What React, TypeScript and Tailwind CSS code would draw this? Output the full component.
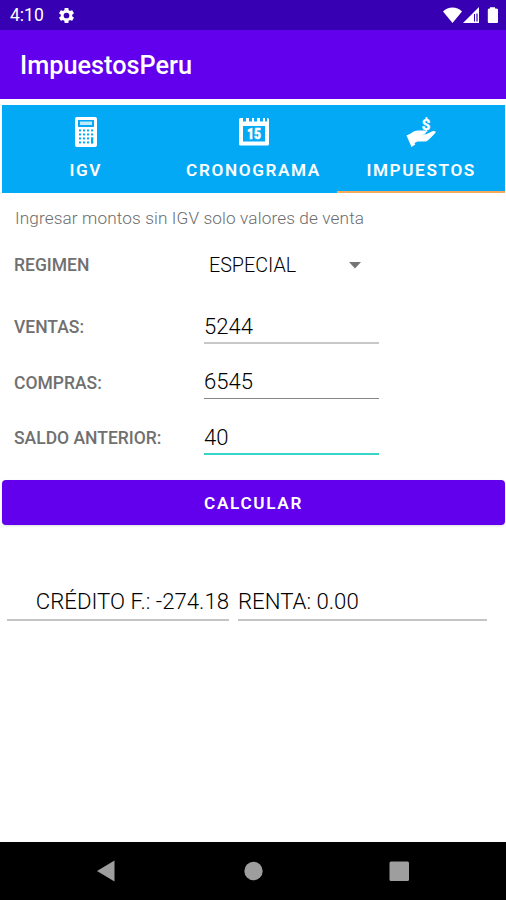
import { useState } from "react";
import clsx from "clsx";

function CalculatorIcon() {
  return (
    <svg className="h-[30px] w-[22px]" viewBox="0 0 22 30">
      <rect x="0" y="0" width="22" height="30" rx="2" fill="#fff" />
      <rect x="3" y="3" width="16" height="7" fill="#03a9f4" />
      <rect x="5" y="4.5" width="12" height="3.5" fill="#fff" fillOpacity="0.75" />
      {[12.5, 16.5, 20.5, 24.5].map((y) =>
        [4, 8, 12, 16].map((x) => (
          <rect key={`${x}-${y}`} x={x} y={y} width="2.2" height="1.9" fill="#03a9f4" />
        ))
      )}
      <rect x="16" y="20.5" width="2.2" height="5.9" fill="#03a9f4" />
    </svg>
  );
}

function CalendarIcon() {
  return (
    <svg className="h-[30px] w-[30px]" viewBox="0 0 30 30">
      <path fill="#fff" fillRule="evenodd" d="M1.5 1H4v3.500h3V1h3v3.500h3V1h2v3.500h3V1h3v3.500h3V1h2v3.500h2V1h.5Q30 1 30 2.500v24.500q0 1.500-1.500 1.500H1.500Q0 28.500 0 27V2.500Q0 1 1.500 1zM4 9v15.500h22V9z" />
      <text x="15" y="22" textAnchor="middle" textLength="14" lengthAdjust="spacingAndGlyphs" fill="#fff" stroke="#fff" strokeWidth="0.500" fontSize="15" fontWeight="900" fontFamily="Roboto, sans-serif">15</text>
    </svg>
  );
}

function HandIcon() {
  return (
    <svg className="h-[30px] w-[30px] overflow-visible" viewBox="0 0 30 30">
      <path fill="#fff" d="M.5 18.600 5.200 16.300C7 14.400 9.500 13.500 12.200 13.500h6.300c2 0 2.200 2.900.4 3.200l-3 .5h4.300l6.200-2.900c2.200-1 4.200.2 2.900 1.600-2 2.300-5 5.200-7.600 7.500-.8.7-1.600 1-2.700 1H11.500l-3 1.600.8 1.400-3.800 2.500z" />
      <text x="20" y="13" textAnchor="middle" fill="#fff" stroke="#fff" strokeWidth="0.400" fontSize="15" fontWeight="700" fontFamily="Roboto, sans-serif">$</text>
    </svg>
  );
}

function StatusBar() {
  return (
    <div className="flex h-[30px] items-center bg-[#3700b3] pr-2 pl-[10px] text-white">
      <span className="pt-[2px] text-[17.5px] leading-none">4:10</span>
      <svg className="ml-[13px] h-[19px] w-[19px]" viewBox="0 0 24 24" fill="currentColor">
        <path d="M19.140 12.940c.040-.300.060-.610.060-.940s-.020-.640-.070-.940l2.030-1.580c.180-.140.230-.410.120-.610l-1.920-3.320c-.120-.220-.370-.290-.590-.220l-2.390.960c-.500-.380-1.030-.700-1.620-.940l-.360-2.540A.484.484 0 0 0 13.920 2.400h-3.840c-.240 0-.430.170-.470.410l-.360 2.540c-.590.240-1.130.570-1.620.940l-2.390-.960c-.220-.080-.470 0-.590.220L2.740 8.870c-.120.210-.080.470.120.610l2.030 1.580c-.050.300-.090.630-.090.940s.020.640.070.940l-2.030 1.580c-.180.140-.230.410-.120.610l1.920 3.320c.120.220.370.290.590.220l2.390-.960c.500.380 1.030.700 1.620.940l.360 2.540c.050.240.240.410.480.410h3.840c.240 0 .440-.170.470-.410l.360-2.540c.590-.240 1.130-.560 1.620-.940l2.390.960c.220.080.470 0 .590-.220l1.920-3.320c.120-.220.070-.470-.120-.610l-2.010-1.580zM12 15.600A3.600 3.600 0 1 1 12 8.400a3.600 3.600 0 0 1 0 7.200z" />
      </svg>
      <svg className="ml-auto h-[18px] w-[55px]" viewBox="0 0 55 18" fill="currentColor">
        <path d="M0 5.500C5 .200 14 .200 19 5.500L9.500 17z" />
        <path d="M36 1v16H20z" />
        <path d="M31.500 8v7.500" stroke="#3700b3" strokeWidth="1" fill="none" />
        <path d="M34 7.500v8" stroke="#3700b3" strokeWidth="1.200" fill="none" />
        <path d="M47 1.200h5v1.200h1q2.200 0 2.200 1.800v11.600q0 1.200-1.200 1.200h-8q-1.200 0-1.200-1.200V4.200Q44.800 2.400 46 2.400h1z" />
      </svg>
    </div>
  );
}

const tabs = [
  { name: "IGV", icon: <CalculatorIcon /> },
  { name: "CRONOGRAMA", icon: <CalendarIcon /> },
  { name: "IMPUESTOS", icon: <HandIcon /> },
];

export default function App() {
  const [activeTab, setActiveTab] = useState("IMPUESTOS");
  const [ventas, setVentas] = useState("5244");
  const [compras, setCompras] = useState("6545");
  const [saldo, setSaldo] = useState("40");

  const fields = [
    { label: "VENTAS:", value: ventas, onChange: setVentas, line: "h-[37px] border-b-2 border-[#c8c8c8]" },
    { label: "COMPRAS:", value: compras, onChange: setCompras, line: "h-[36px] border-b border-[#858585]" },
    { label: "SALDO ANTERIOR:", value: saldo, onChange: setSaldo, line: "h-[37px] border-b-2 border-[#35d6c7]" },
  ];

  return (
    <div className="flex h-[900px] w-[506px] flex-col overflow-hidden bg-white font-[Roboto,sans-serif]">
      <StatusBar />

      <header className="flex h-[69px] items-center bg-[#6200ee] pl-5">
        <h1 className="pt-[3px] text-[25.300px] leading-none font-medium text-white">ImpuestosPeru</h1>
      </header>

      {/* Tabs */}
      <nav className="mt-[6px] mr-px ml-[2px] flex h-[88px] bg-[#03a9f4]">
        {tabs.map((tab) => (
          <button
            key={tab.name}
            onClick={() => setActiveTab(tab.name)}
            className={clsx(
              "flex flex-1 flex-col items-center border-b-2 pt-3 text-white",
              activeTab === tab.name ? "border-[#f5aa5c]" : "border-transparent"
            )}
          >
            {tab.icon}
            <span className="mt-[14px] text-[17.200px] leading-[18px] font-semibold tracking-[1.600px]">{tab.name}</span>
          </button>
        ))}
      </nav>

      {/* Formulario */}
      <main className="flex-1">
        <p className="mt-[15px] ml-[15px] text-[17.200px] leading-5 font-light tracking-[0.120px] text-[#6c6c6c]">Ingresar montos sin IGV solo valores de venta</p>

        <div className="mt-[18px] flex h-10 items-center pl-[14px]">
          <label className="w-[195px] pb-px text-[17.500px] font-medium text-[#707070]">REGIMEN</label>
          <button className="flex w-[152px] items-center justify-between text-[19.700px] font-light text-black">
            ESPECIAL
            <svg className="h-[7px] w-3" viewBox="0 0 12 7"><path d="M0 0h12L6 6.500z" fill="#757575" /></svg>
          </button>
        </div>

        <div className="mt-[21px]">
          {fields.map((field) => (
            <div key={field.label} className="flex h-[55.500px] items-start pl-[14px]">
              <label className="w-[190px] pt-[10px] text-[17.500px] leading-5 font-medium text-[#707070]">{field.label}</label>
              <input
                value={field.value}
                onChange={(e) => field.onChange(e.target.value)}
                className={clsx("w-[175px] pt-[2px] text-[22.100px] font-light text-black outline-none", field.line)}
              />
            </div>
          ))}
        </div>

        <button className="mt-[6px] ml-[2px] block h-[45px] w-[503px] rounded-[4px] bg-[#6200ee] pt-[4px] text-[17.200px] font-semibold tracking-[1.640px] text-white shadow-sm">
          CALCULAR
        </button>

        {/* Resultados */}
        <div className="mt-[59px] flex gap-[9px] pl-[7px] text-[22.200px] font-light text-black">
          <div className="h-[37px] w-[222px] border-b-2 border-[#c4c4c4] pt-px text-right whitespace-nowrap">CRÉDITO F.: -274.18</div>
          <div className="h-[37px] w-[249px] border-b-2 border-[#c4c4c4] pt-px whitespace-nowrap">RENTA: 0.00</div>
        </div>
      </main>

      {/* Barra de navegación */}
      <footer className="flex h-[58px] items-center bg-black">
        <svg className="h-[58px] w-[506px]" viewBox="0 0 506 58" fill="#9e9e9e">
          <path d="M97 29 114.500 18.500V39.500z" />
          <circle cx="253.500" cy="29" r="9.200" />
          <rect x="389.500" y="19.500" width="19.500" height="19.500" rx="1.500" />
        </svg>
      </footer>
    </div>
  );
}
